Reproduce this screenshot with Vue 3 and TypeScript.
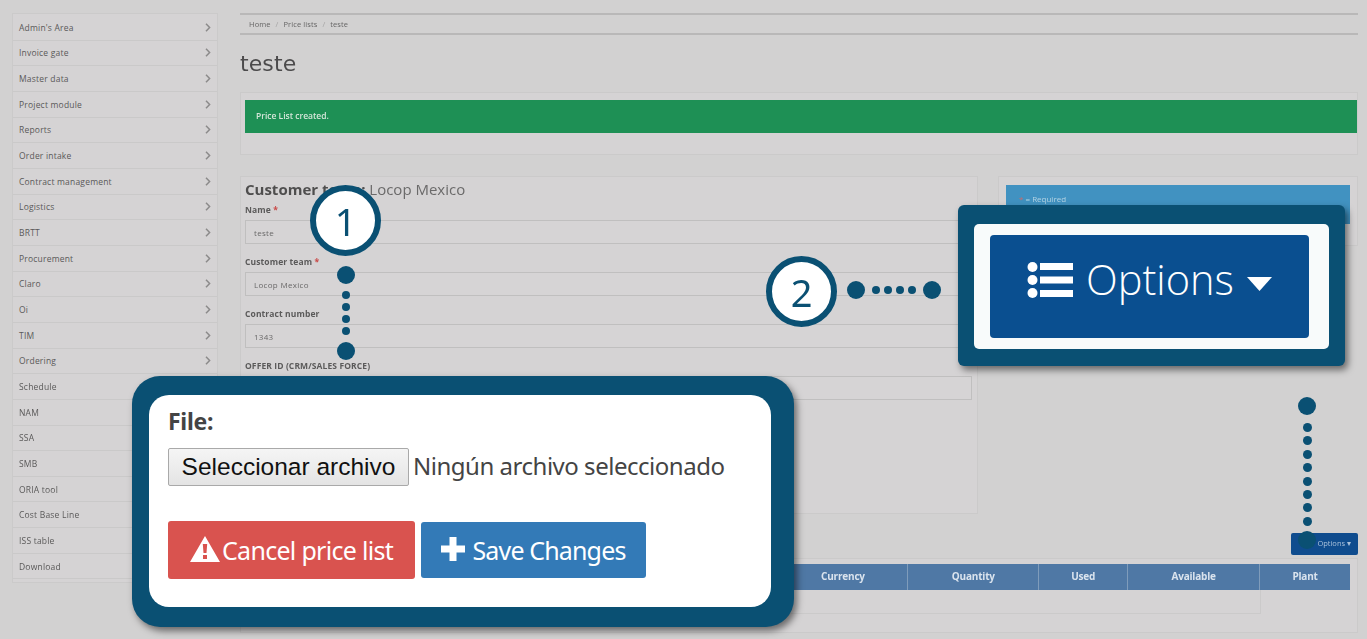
<script setup lang="ts">
const menu: { label: string; more: boolean }[] = [
  'Admin\'s Area', 'Invoice gate', 'Master data', 'Project module', 'Reports', 'Order intake',
  'Contract management', 'Logistics', 'BRTT', 'Procurement', 'Claro', 'Oi', 'TIM', 'Ordering',
  'Schedule', 'NAM', 'SSA', 'SMB', 'ORIA tool', 'Cost Base Line', 'ISS table', 'Download',
].map((label, i) => ({ label, more: i < 14 }))

const fields = [
  { label: 'Name', req: true, value: 'teste' },
  { label: 'Customer team', req: true, value: 'Locop Mexico' },
  { label: 'Contract number', req: false, value: '1343' },
  { label: 'OFFER ID (CRM/SALES FORCE)', req: false, value: '' },
]

const columns = [
  { label: '', width: 533 },
  { label: 'Currency', width: 130 },
  { label: 'Quantity', width: 131 },
  { label: 'Used', width: 89 },
  { label: 'Available', width: 132 },
  { label: 'Plant', width: 90 },
]
</script>

<template>
  <div class="screen">
    <div class="backdrop">
      <nav class="menu">
        <div v-for="item in menu" :key="item.label" class="menu-row">
          <span>{{ item.label }}</span>
          <svg v-if="item.more" width="6" height="9" viewBox="0 0 6 9"><path d="M1 .8 4.600 4.500 1 8.200" fill="none" stroke="#8c8b8b" stroke-width="1.500" /></svg>
        </div>
      </nav>

      <main class="content">
        <div class="crumbs"><span>Home</span><i>/</i><span>Price lists</span><i>/</i><span>teste</span></div>
        <h1 class="title">teste</h1>

        <section class="panel notice">
          <div class="success">Price List created.</div>
        </section>

        <div class="columns">
          <section class="panel form">
            <h2><b>Customer team:</b> Locop Mexico</h2>
            <div v-for="f in fields" :key="f.label" class="field">
              <label>{{ f.label }} <em v-if="f.req">*</em></label>
              <div class="input">{{ f.value }}</div>
            </div>
          </section>
          <section class="panel side">
            <div class="info"><em>*</em> = Required</div>
          </section>
        </div>

        <div class="actions">
          <div class="mini-btn">Options ▾</div>
        </div>

        <section class="panel lines">
          <div class="thead">
            <div v-for="c in columns" :key="c.label" class="th" :style="{ width: c.width + 'px' }">{{ c.label }}</div>
          </div>
          <div class="tbody"></div>
        </section>
      </main>
    </div>

    <!-- step markers and their dotted leaders -->
    <div class="badge badge-one">1</div>
    <div class="leader leader-one">
      <span class="dot big"></span>
      <span v-for="n in 4" :key="n" class="dot"></span>
      <span class="dot big"></span>
    </div>

    <div class="badge badge-two">2</div>
    <div class="leader leader-two">
      <span class="dot big"></span>
      <span v-for="n in 4" :key="n" class="dot"></span>
      <span class="dot big"></span>
    </div>

    <div class="leader leader-three">
      <span class="dot big"></span>
      <span v-for="n in 8" :key="n" class="dot"></span>
      <span class="dot big"></span>
    </div>

    <!-- callout: file form -->
    <div class="callout callout-file">
      <div class="card">
        <div class="file-label">File:</div>
        <div class="file-row">
          <button class="file-btn" type="button">Seleccionar archivo</button>
          <span class="file-none">Ningún archivo seleccionado</span>
        </div>
        <div class="btn-row">
          <button class="btn danger" type="button">
            <svg width="30" height="26" viewBox="0 0 30 26"><path fill-rule="evenodd" fill="#fff" d="M15 0 30 26H0ZM12.800 8l.7 9h3l.7-9ZM13 19v4h4v-4Z" /></svg>
            <span>Cancel price list</span>
          </button>
          <button class="btn primary" type="button">
            <svg width="24" height="24" viewBox="0 0 24 24"><path fill="#fff" d="M8.500 0h7v8.500h8.500v7h-8.500V24h-7v-8.500H0v-7h8.500Z" /></svg>
            <span>Save Changes</span>
          </button>
        </div>
      </div>
    </div>

    <!-- callout: options button -->
    <div class="callout callout-options">
      <div class="card-options">
        <div class="options-btn">
          <svg width="46" height="36" viewBox="0 0 46 36">
            <circle cx="5.500" cy="5" r="5" fill="#fff" />
            <circle cx="5.500" cy="18" r="5" fill="#fff" />
            <circle cx="5.500" cy="31" r="5" fill="#fff" />
            <rect x="13" y="1" width="33" height="7" fill="#fff" />
            <rect x="13" y="14.500" width="33" height="7" fill="#fff" />
            <rect x="13" y="28" width="33" height="7" fill="#fff" />
          </svg>
          <span class="options-text">Options</span>
          <svg class="options-caret" width="25" height="14" viewBox="0 0 25 14"><path d="M0 0H25L12.500 14Z" fill="#fff" /></svg>
        </div>
      </div>
    </div>
  </div>
</template>

<style>
html, body { margin: 0; background: #d2d1d1; }
</style>

<style scoped>
.screen {
  position: relative;
  width: 1367px;
  height: 639px;
  overflow: hidden;
  background: #d2d1d1;
  font-family: "Open Sans", "Liberation Sans", sans-serif;
}

/* blurred page behind the callouts */
.backdrop {
  display: flex;
  align-items: flex-start;
  gap: 22px;
  height: 639px;
  box-sizing: border-box;
  padding: 13px 9px 0 12px;
  filter: blur(0.75px);
}
.menu {
  flex: 0 0 206px;
  box-sizing: border-box;
  padding: 1px 0 3px;
  border: 1px solid #cbcaca;
  background: #d5d3d4;
}
.menu-row {
  display: flex;
  align-items: center;
  justify-content: space-between;
  height: 25.670px;
  box-sizing: border-box;
  padding: 0 6px 0 6px;
  border-bottom: 1px solid #cac9c9;
  font-size: 8.500px;
  letter-spacing: 0.2px;
  color: #5a5959;
}
.content { flex: 1; min-width: 0; }
.crumbs {
  display: flex;
  align-items: center;
  gap: 5px;
  height: 22px;
  box-sizing: border-box;
  padding-left: 9px;
  border-top: 2px solid #b9b8b8;
  border-bottom: 2px solid #b9b8b8;
  font-size: 7.500px;
  letter-spacing: 0.1px;
  color: #666565;
}
.crumbs i { font-style: normal; color: #a5a4a4; }
.title {
  margin: 15px 0 14px;
  font-family: "DejaVu Sans", sans-serif;
  font-weight: 400;
  font-size: 22px;
  line-height: 28px;
  letter-spacing: 0.1px;
  color: #4c4b4c;
}
.panel {
  box-sizing: border-box;
  border: 1px solid #cbcaca;
  background: #d5d3d4;
}
.notice {
  height: 63px;
  padding: 7px 0 0 4px;
}
.success {
  display: flex;
  align-items: center;
  height: 33px;
  padding: 0 0 2px 11px;
  box-sizing: border-box;
  background: #1e9055;
  color: #d6e6da;
  font-size: 8.500px;
  font-weight: 600;
}
.columns {
  display: flex;
  align-items: flex-start;
  gap: 20px;
  margin-top: 21px;
}
.form {
  flex: 0 0 738px;
  height: 338px;
  padding: 2px 5px 0 4px;
}
.form h2 {
  margin: 0 0 4px;
  font-size: 15px;
  font-weight: 400;
  line-height: 20px;
  color: #6b6a6a;
}
.form h2 b { color: #4f4e4e; font-weight: 700; }
.field { margin-bottom: 11px; }
.field label {
  display: block;
  height: 17px;
  font-size: 8.500px;
  font-weight: 700;
  line-height: 14px;
  letter-spacing: 0.1px;
  color: #5b5a5a;
}
.field em { color: #c94a48; font-style: normal; }
.input {
  display: flex;
  align-items: center;
  height: 24px;
  box-sizing: border-box;
  padding-left: 8px;
  border: 1px solid #c0bfbf;
  background: #d6d4d5;
  font-size: 8px;
  letter-spacing: 0.3px;
  color: #6a6969;
}
.side {
  flex: 1;
  height: 70px;
  padding: 8px 7px 0;
}
.info {
  height: 39px;
  box-sizing: border-box;
  padding: 8px 13px;
  background: #4192c1;
  color: #b3d2e3;
  font-size: 8px;
}
.info em { color: #c96a6a; font-style: normal; }
.actions {
  display: flex;
  justify-content: flex-end;
  margin-top: 19px;
}
.mini-btn {
  width: 67px;
  height: 22px;
  box-sizing: border-box;
  padding: 5px 7px 0 0;
  border-radius: 2px;
  background: #0f4c8e;
  color: #a9c0da;
  font-size: 7.500px;
  text-align: right;
}
.lines {
  height: 75px;
  margin-top: 3px;
  padding: 5px 7px 0 5px;
}
.thead {
  display: flex;
  height: 26px;
  background: #4f78a5;
}
.th {
  box-sizing: border-box;
  border-right: 1px solid #7f9cbb;
  color: #dbe4ee;
  font-size: 10px;
  font-weight: 700;
  letter-spacing: -0.2px;
  line-height: 24px;
  text-align: center;
}
.th:last-child { border-right: 0; }
.tbody {
  height: 24px;
  width: 1015px;
  box-sizing: border-box;
  border: 1px solid #cbcaca;
  border-top: 0;
}

/* step markers */
.badge {
  position: absolute;
  display: flex;
  align-items: center;
  justify-content: center;
  width: 71px;
  height: 71px;
  box-sizing: border-box;
  border: 6px solid #0a5073;
  border-radius: 50%;
  background: #fff;
  color: #0a5073;
  font-family: "Noto Sans", sans-serif;
  font-weight: 400;
  font-size: 38px;
  line-height: 1;
}
.badge-one { left: 310px; top: 185px; }
.badge-two { left: 766px; top: 256px; }

.leader {
  position: absolute;
  display: flex;
  align-items: center;
}
.leader-one { left: 337px; top: 266px; flex-direction: column; gap: 4px; }
.leader-two { left: 847px; top: 281px; gap: 4px; }
.leader-three { left: 1298px; top: 397px; flex-direction: column; gap: 4.430px; }
.dot {
  flex: none;
  width: 8px;
  height: 8px;
  border-radius: 50%;
  background: #0a5073;
}
.dot.big { width: 18px; height: 18px; }
.leader-one .dot.big:first-child { margin-bottom: 3px; }
.leader-one .dot.big:last-child { margin-top: 3px; }
.leader-two .dot.big:first-child { margin-right: 3px; }
.leader-two .dot.big:last-child { margin-left: 3px; }
.leader-three .dot { width: 9px; height: 9px; }
.leader-three .dot.big { width: 18px; height: 18px; }
.leader-three .dot.big:first-child { margin-bottom: 3.500px; }
.leader-three .dot.big:last-child { margin-top: 1px; }

/* callouts */
.callout {
  position: absolute;
  box-sizing: border-box;
  background: #0a5073;
  box-shadow: 3px 4px 7px rgba(0, 0, 0, 0.5);
}
.callout-file {
  left: 132px;
  top: 376px;
  width: 662px;
  height: 251px;
  padding: 19px 23px 20px 17px;
  border-radius: 28px;
}
.card {
  height: 100%;
  box-sizing: border-box;
  padding: 10px 19px 0;
  border-radius: 20px;
  background: #fff;
}
.file-label {
  font-family: "Noto Sans", sans-serif;
  font-weight: 700;
  font-size: 23px;
  line-height: 32px;
  letter-spacing: -0.3px;
  color: #444;
}
.file-row {
  display: flex;
  align-items: center;
  gap: 4px;
  margin-top: 11px;
}
.file-btn {
  width: 241px;
  height: 38px;
  padding: 0;
  border: 1px solid #a9a9a9;
  border-radius: 2px;
  background: linear-gradient(#f5f5f5, #e4e4e4);
  color: #111;
  font-family: "Liberation Sans", sans-serif;
  font-size: 24.500px;
}
.file-none {
  position: relative;
  top: -2px;
  font-family: "Noto Sans", sans-serif;
  font-size: 24px;
  letter-spacing: -0.480px;
  color: #444;
}
.btn-row {
  display: flex;
  align-items: center;
  gap: 6px;
  margin-top: 35px;
}
.btn {
  display: flex;
  align-items: center;
  justify-content: center;
  gap: 2px;
  padding: 0;
  border: 0;
  border-radius: 3px;
  color: #fff;
  font-family: "Noto Sans", sans-serif;
  font-size: 25px;
  letter-spacing: -0.700px;
}
.danger { width: 247px; height: 58px; background: #d9534f; }
.primary { width: 225px; height: 56px; gap: 7px; letter-spacing: -0.850px; background: #337ab7; }
.danger svg, .primary svg { position: relative; top: -1px; }

.callout-options {
  left: 958px;
  top: 205px;
  width: 387px;
  height: 161px;
  padding: 19px 16px 17px;
  border-radius: 6px;
}
.card-options {
  height: 100%;
  box-sizing: border-box;
  padding: 11px 20px 11px 16px;
  border-radius: 5px;
  background: #f8fbfb;
}
.options-btn {
  display: flex;
  align-items: center;
  justify-content: center;
  gap: 13px;
  height: 103px;
  padding-bottom: 14px;
  box-sizing: border-box;
  border-radius: 4px;
  background: #0a4f90;
}
.options-text {
  position: relative;
  top: -1px;
  color: #fff;
  font-family: "Open Sans", sans-serif;
  font-weight: 300;
  font-size: 41.500px;
  line-height: 50px;
}
.options-caret { margin-top: 9px; }
</style>
